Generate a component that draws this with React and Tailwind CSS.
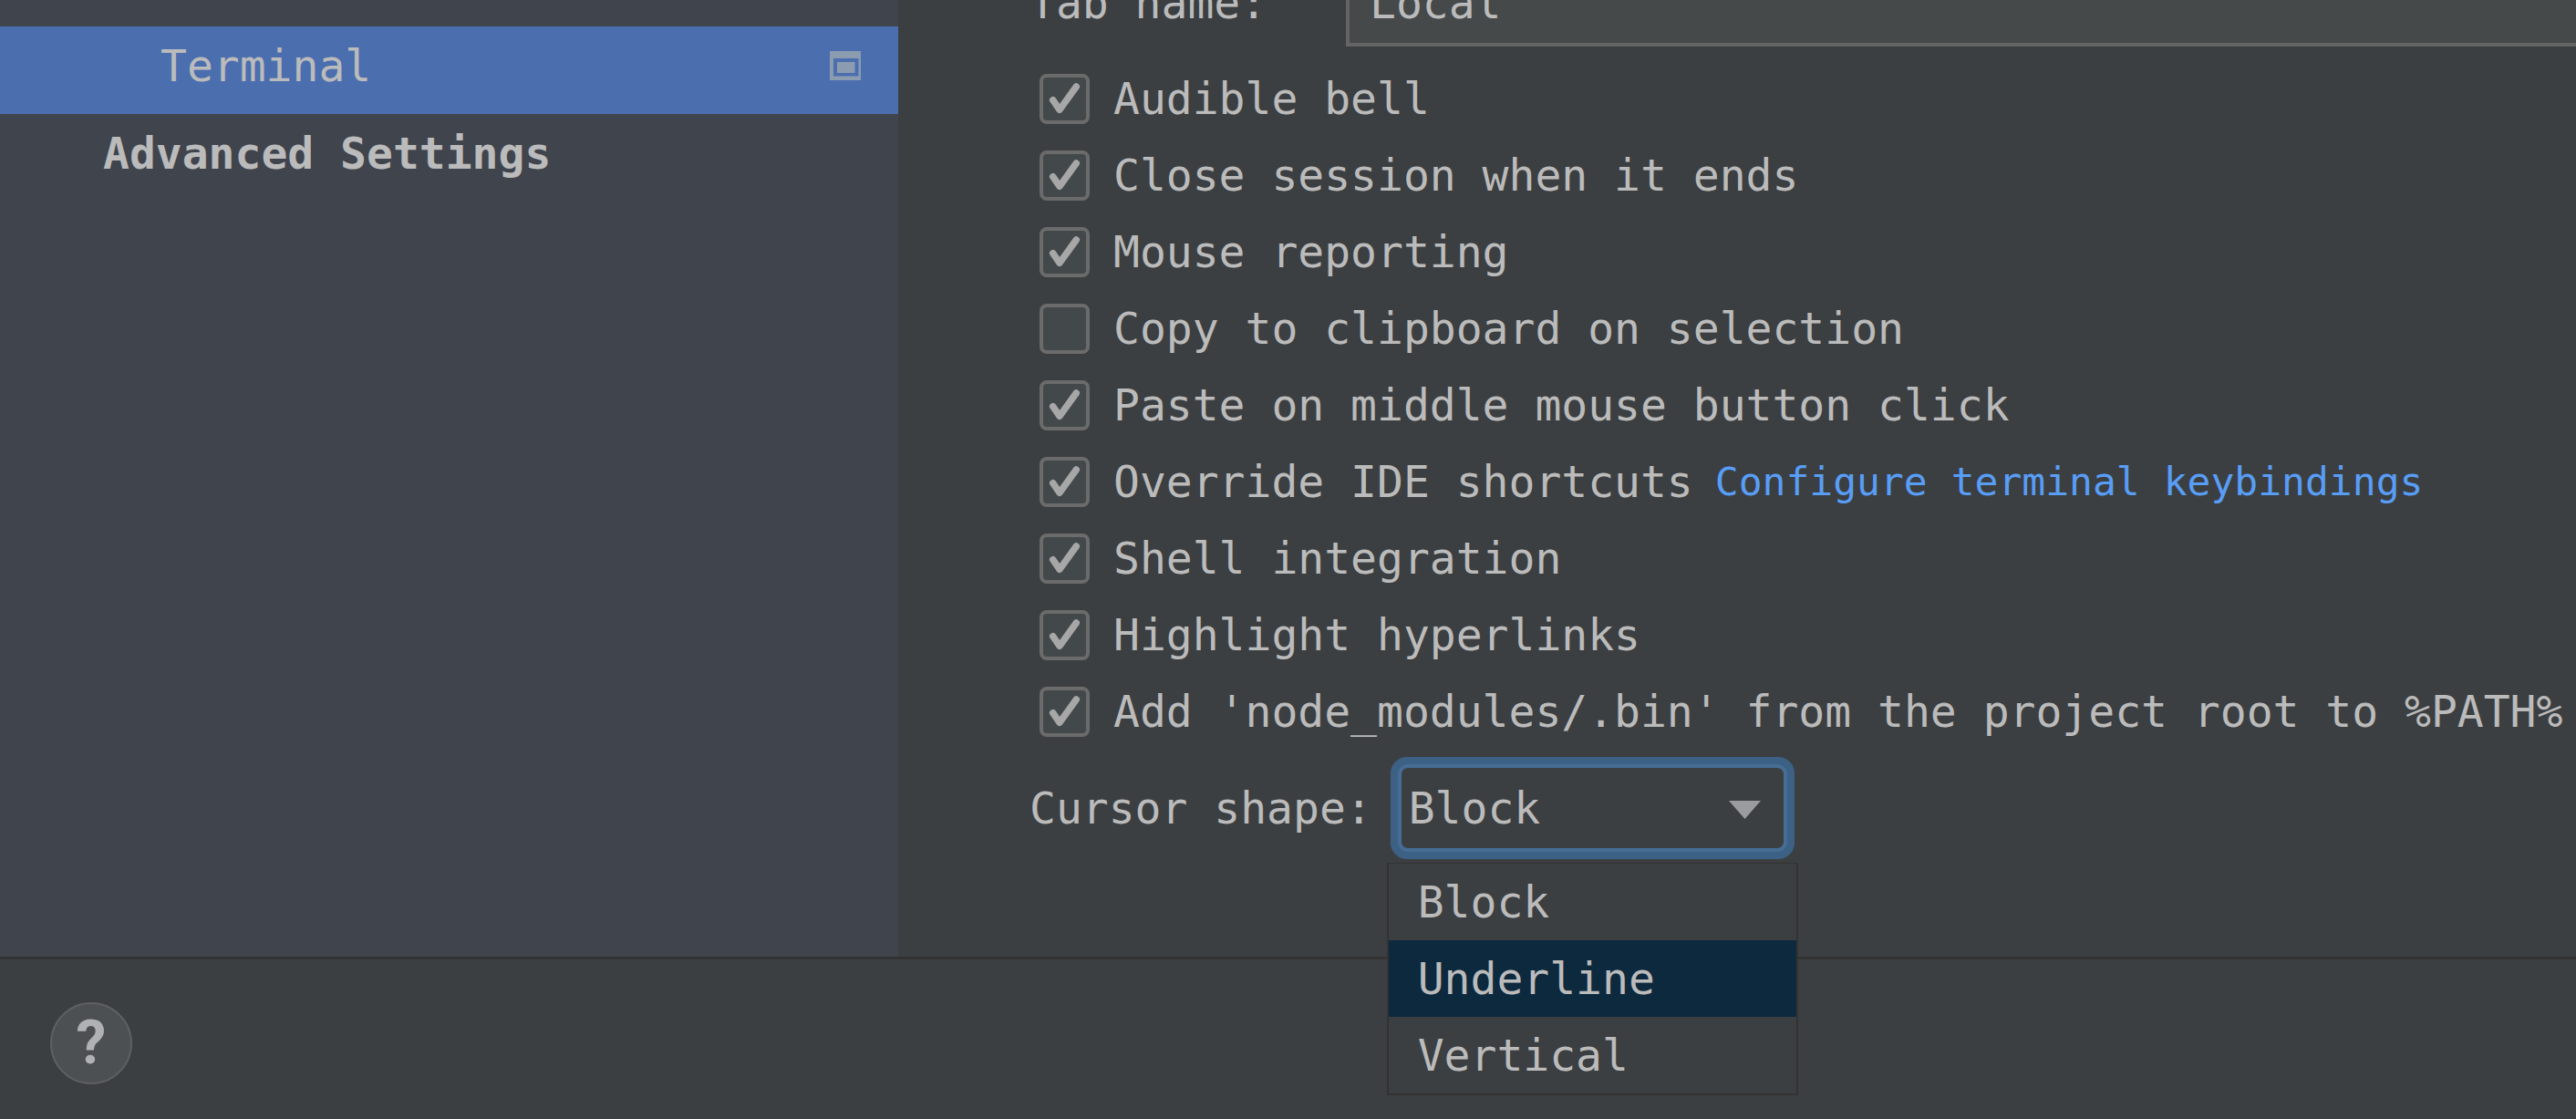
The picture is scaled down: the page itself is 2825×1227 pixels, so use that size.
const OPTIONS = [
  { id: "bell", label: "Audible bell", checked: true },
  { id: "close", label: "Close session when it ends", checked: true },
  { id: "mouse", label: "Mouse reporting", checked: true },
  { id: "copy", label: "Copy to clipboard on selection", checked: false },
  { id: "paste", label: "Paste on middle mouse button click", checked: true },
  {
    id: "override",
    label: "Override IDE shortcuts",
    checked: true,
    link: "Configure terminal keybindings",
  },
  { id: "shell", label: "Shell integration", checked: true },
  { id: "links", label: "Highlight hyperlinks", checked: true },
  {
    id: "path",
    label: "Add 'node_modules/.bin' from the project root to %PATH%",
    checked: true,
  },
];

const SHAPES = ["Block", "Underline", "Vertical"];

function ProjectIcon() {
  return (
    <svg width="34" height="32" viewBox="0 0 34 32" fill="#8c9cb0" aria-hidden="true">
      <path fillRule="evenodd" d="M0 0H34V32H0ZM4 8V27.5H31.5V8Z" />
      <rect x="8" y="12" width="19.5" height="12" />
    </svg>
  );
}

function CheckOption({ id, label, checked, link }) {
  return (
    <div className="flex h-[84px] items-center">
      <span className="grid size-[55px] shrink-0">
        <input
          id={id}
          type="checkbox"
          defaultChecked={checked}
          className="peer col-start-1 row-start-1 size-[55px] appearance-none rounded-[8px] border-4 border-[#6b6b6b] bg-[#43494a]"
        />
        <svg
          viewBox="0 0 55 55"
          className="pointer-events-none invisible col-start-1 row-start-1 size-[55px] peer-checked:visible"
          fill="none"
          stroke="#a7a7a7"
          strokeWidth="7.4"
          strokeLinecap="round"
          strokeLinejoin="round"
          aria-hidden="true"
        >
          <path d="M14.7 28.7L22 39.3L40.3 14" />
        </svg>
      </span>
      <label htmlFor={id} className="pl-[26px]">
        {label}
      </label>
      {link && (
        <a href="#keybindings" className="ml-6 text-[43px] text-[#589df6]">
          {link}
        </a>
      )}
    </div>
  );
}

function Sidebar() {
  return (
    <nav className="w-[985px] shrink-0 bg-[#40444d] pt-[29px]">
      <a
        href="#terminal"
        aria-current="page"
        className="flex h-24 items-center justify-between bg-[#4b6eaf] pr-[41px] pb-[10px] pl-44"
      >
        <span>Terminal</span>
        <ProjectIcon />
      </a>
      <a href="#advanced" className="flex h-24 items-center pb-[10px] pl-[113px] font-bold">
        Advanced Settings
      </a>
    </nav>
  );
}

function CursorShape() {
  return (
    <div className="mt-2 flex items-center">
      <label htmlFor="cursor-shape">Cursor shape:</label>
      <div className="relative ml-5">
        <div className="rounded-[18px] bg-[#3d6185] p-2">
          <div className="grid items-center rounded-[11px] border-4 border-[#466d94] bg-[#3c3f41]">
            <select
              id="cursor-shape"
              defaultValue="Block"
              className="col-start-1 row-start-1 h-[88px] w-[419px] appearance-none bg-transparent pl-2 outline-none"
            >
              {SHAPES.map((shape) => (
                <option key={shape}>{shape}</option>
              ))}
            </select>
            <svg
              width="35"
              height="20"
              viewBox="0 0 35 20"
              className="pointer-events-none col-start-1 row-start-1 mt-1 mr-[25px] justify-self-end"
              aria-hidden="true"
            >
              <path d="M0 0H35L17.5 20Z" fill="#9a9c9f" />
            </svg>
          </div>
        </div>
        <ul
          role="listbox"
          aria-label="Cursor shape"
          className="absolute top-full -right-1 -left-1 z-10 mt-1 border-2 border-t border-[#323232] bg-[#3c3f41]"
        >
          {SHAPES.map((shape) => (
            <li
              key={shape}
              role="option"
              aria-selected={shape === "Underline"}
              className="flex h-[84px] items-center pl-8 aria-selected:bg-[#0d293e]"
            >
              {shape}
            </li>
          ))}
        </ul>
      </div>
    </div>
  );
}

export default function App() {
  return (
    <div className="flex min-h-screen flex-col overflow-hidden bg-[#3c3f41] font-['DejaVu_Sans_Mono',monospace] text-5xl whitespace-nowrap text-[#bbbbbb]">
      <div className="flex flex-1">
        <Sidebar />
        <main className="min-w-0 flex-1 pl-36">
          <div className="flex h-[51px] items-end overflow-hidden">
            <label htmlFor="tab-name" className="flex h-24 w-[347px] shrink-0 items-center">
              Tab name:
            </label>
            <input
              id="tab-name"
              type="text"
              defaultValue="Local"
              className="h-24 min-w-0 flex-1 border-4 border-r-0 border-[#646464] bg-[#45494a] pl-[22px] outline-none"
            />
          </div>
          <div className="mt-[15px] pl-[11px]">
            {OPTIONS.map((option) => (
              <CheckOption key={option.id} {...option} />
            ))}
          </div>
          <CursorShape />
        </main>
      </div>
      <footer className="flex h-[178px] items-center border-t-[3px] border-[#323232] pt-2 pl-[55px]">
        <button
          type="button"
          aria-label="Help"
          className="flex size-[90px] items-center justify-center rounded-full border-2 border-[#5e6060] bg-[#4c5052] font-['Roboto',sans-serif] text-[66px] font-bold text-[#afb1b3]"
        >
          ?
        </button>
      </footer>
    </div>
  );
}
